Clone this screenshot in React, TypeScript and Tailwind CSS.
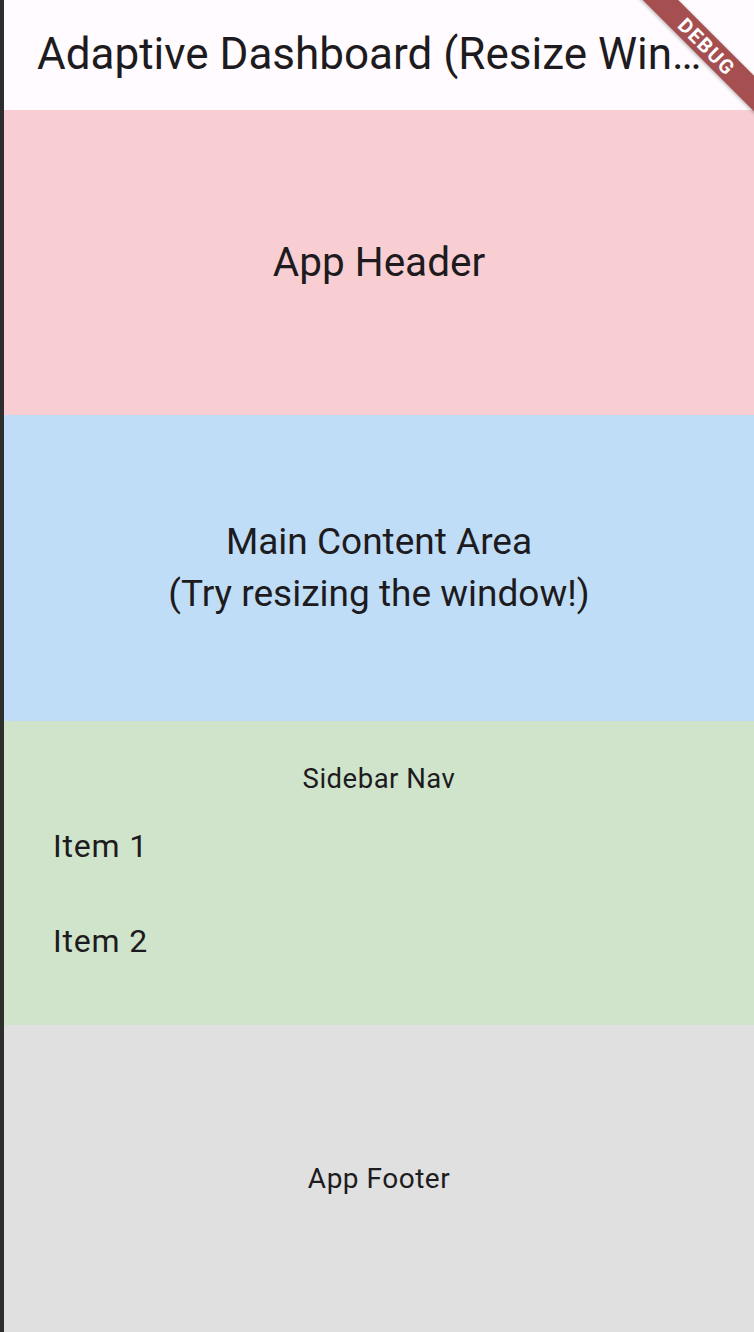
const DebugBanner = () => (
  <div className="pointer-events-none absolute right-[-53px] top-[34px] flex h-[25px] w-[200px] rotate-45 items-center justify-center bg-[#a64f51] shadow-[0_1px_4px_rgba(0,0,0,0.35)]">
    <span className="text-[20px] font-bold leading-none tracking-[1.5px] text-white">DEBUG</span>
  </div>
);

export default function App() {
  return (
    <div
      className="relative flex h-[1332px] w-full overflow-hidden text-[#1d1b20]"
      style={{ fontFamily: "Roboto, 'Noto Sans', sans-serif" }}
    >
      <div className="w-[4px] shrink-0 bg-[#2e2e2e]" />
      <div className="flex min-w-0 flex-1 flex-col">
        {/* app bar */}
        <div className="flex h-[110px] shrink-0 items-center bg-[#fffbfe] pb-[3px] pl-[33px] pr-[34px]">
          <h1 className="truncate text-[44px] leading-[56px]">
            Adaptive Dashboard (Resize Window)
          </h1>
        </div>

        <div className="flex h-[305px] shrink-0 items-center justify-center bg-[#f8ced3]">
          <span className="text-[40.5px]">App Header</span>
        </div>

        <div className="flex h-[306px] shrink-0 items-center justify-center bg-[#c0ddf7]">
          <p className="text-center text-[37px] leading-[52px]">
            Main Content Area
            <br />
            (Try resizing the window!)
          </p>
        </div>

        <div className="flex h-[304px] shrink-0 flex-col bg-[#cfe4cb] pt-[38px]">
          <div className="text-center text-[27.5px] leading-[39px] tracking-[0.5px]">Sidebar Nav</div>
          <div className="flex h-[95px] items-center pl-[49px] text-[32px] tracking-[0.8px]">Item 1</div>
          <div className="flex h-[95px] items-center pl-[49px] text-[32px] tracking-[0.8px]">Item 2</div>
        </div>

        <div className="flex h-[307px] shrink-0 items-center justify-center bg-[#e0e0e0]">
          <span className="text-[28px] tracking-[0.5px]">App Footer</span>
        </div>
      </div>
      <DebugBanner />
    </div>
  );
}
